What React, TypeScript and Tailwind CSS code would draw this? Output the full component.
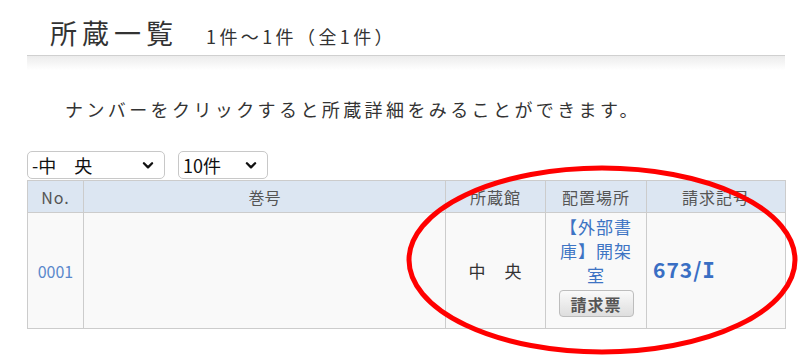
import React from 'react'

const font = { fontFamily: '"Noto Sans CJK JP", "Noto Sans", sans-serif' }

function Chevron() {
	return (
		<svg width="14" height="14" viewBox="0 0 24 24" fill="none" stroke="#111" strokeWidth="4" strokeLinecap="round" strokeLinejoin="round">
			<path d="M5 9l7 7 7-7" />
		</svg>
	)
}

function FakeSelect({ label, width }: { label: string; width: string }) {
	return (
		<div className={`${width} h-[28px] flex items-center justify-between pl-[4px] pr-[9px] border border-[#c8c8c8] rounded-[5px] bg-white text-[18px] text-[#111] leading-none`}>
			<span>{label}</span>
			<Chevron />
		</div>
	)
}

export default function App() {
	return (
		<div className="relative w-[800px] h-[358px] overflow-hidden bg-white text-[#333]" style={font}>
			<div className="ml-[27px] w-[758px]">
				<div className="h-[56px] flex items-end pl-[23px] pb-[9px] border-b border-[#d0d0d0]">
					<h1 className="text-[27px] leading-none tracking-[5px] text-[#333]">所蔵一覧</h1>
					<span className="ml-[28px] mb-[1px] text-[18px] leading-none tracking-[3.4px] text-[#333]">1件～1件（全1件）</span>
				</div>
				<div className="h-[14px] bg-gradient-to-b from-[#ececec] to-white" />
				<p className="mt-[30px] ml-[38px] text-[18px] leading-none tracking-[3.4px] text-[#333]">
					ナンバーをクリックすると所蔵詳細をみることができます。
				</p>
				<div className="mt-[33px] flex gap-[13px]">
					<FakeSelect label="-中　央" width="w-[138px]" />
					<FakeSelect label="10件" width="w-[90px]" />
				</div>
				<table className="mt-[1px] w-[758px] border-collapse table-fixed">
					<thead>
						<tr className="h-[32px] bg-[#dce6f2] text-[16px] text-[#555]">
							<th className="w-[56px] border border-[#cccccc] font-normal tracking-[1px]">No.</th>
							<th className="w-[362px] border border-[#cccccc] font-normal">巻号</th>
							<th className="w-[100px] border border-[#cccccc] font-normal tracking-[1px]">所蔵館</th>
							<th className="w-[101px] border border-[#cccccc] font-normal tracking-[1px]">配置場所</th>
							<th className="w-[139px] border border-[#cccccc] font-normal tracking-[1px]">請求記号</th>
						</tr>
					</thead>
					<tbody>
						<tr className="h-[116px] bg-[#f9f9f9]">
							<td className="border border-[#cccccc] text-center text-[16px] text-[#5a88cc]">0001</td>
							<td className="border border-[#cccccc]"></td>
							<td className="border border-[#cccccc] text-center text-[17px] tracking-[1px]">中　央</td>
							<td className="border border-[#cccccc] text-center px-[8px] pb-[9px]">
								<div className="text-[17px] leading-[24px] text-[#3d74c4] tracking-[1px]">【外部書庫】開架室</div>
								<button className="mt-[3px] w-[75px] h-[27px] rounded-[4px] border border-[#bdbdbd] bg-gradient-to-b from-[#fafafa] to-[#dedede] text-[16px] font-bold text-[#555] leading-none tracking-[1px]">
									請求票
								</button>
							</td>
							<td className="border border-[#cccccc] pl-[6px] text-[21px] font-bold text-[#3a6fc4] tracking-[1px]">
								673/<span style={{ fontFamily: '"DejaVu Sans Mono", monospace' }}>I</span>
							</td>
						</tr>
					</tbody>
				</table>
			</div>
			<svg className="absolute left-0 top-0 pointer-events-none" width="800" height="358" viewBox="0 0 800 358">
				<ellipse cx="602" cy="260" rx="193" ry="92" fill="none" stroke="#ff0000" strokeWidth="5" />
			</svg>
		</div>
	)
}
